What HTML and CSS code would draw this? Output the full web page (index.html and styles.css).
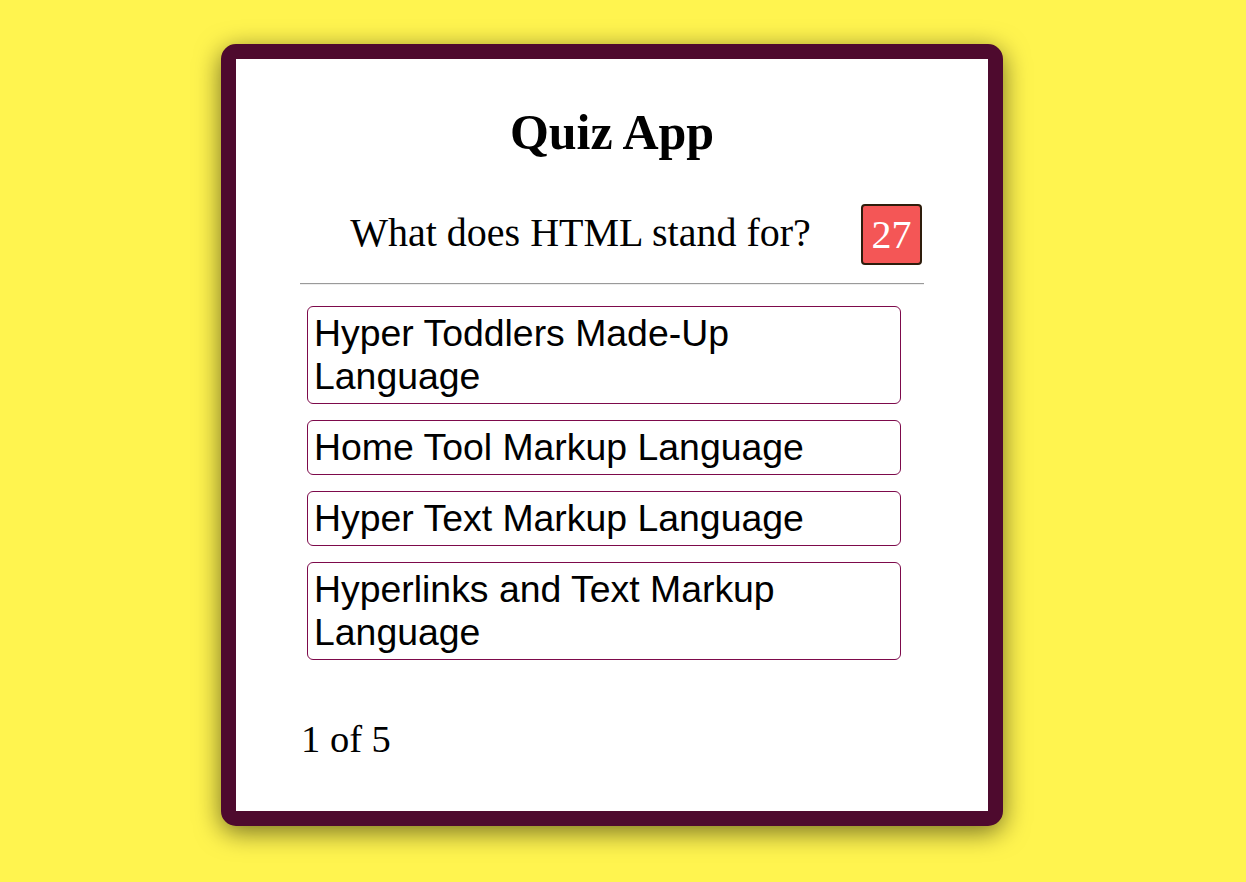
FILE: index.html
```html
<!DOCTYPE html>
<html>
<head>
<meta charset="utf-8">
<title>Quiz App</title>
<link rel="stylesheet" href="styles.css">
</head>
<body>
<div class="page">
  <div class="card">
    <h1 class="title">Quiz App</h1>
    <div class="question-row">
      <div class="question">What does HTML stand for?</div>
      <div class="timer">27</div>
    </div>
    <hr class="divider">
    <div class="options">
      <div class="option">Hyper Toddlers Made-Up Language</div>
      <div class="option">Home Tool Markup Language</div>
      <div class="option">Hyper Text Markup Language</div>
      <div class="option">Hyperlinks and Text Markup Language</div>
    </div>
    <div class="progress">1 of 5</div>
  </div>
</div>
</body>
</html>
```

FILE: styles.css
```css
html, body {
  margin: 0;
  padding: 0;
  background: #fff44f;
  font-family: "Liberation Serif", "Times New Roman", serif;
}

.page {
  padding: 44px 0 0 221px;
  height: 882px;
  box-sizing: border-box;
}

.card {
  width: 782px;
  height: 782px;
  box-sizing: border-box;
  background: #ffffff;
  border: 15px solid #4e0a2e;
  border-radius: 15px;
  box-shadow: 0 6px 26px rgba(0, 0, 0, 0.55);
  padding: 0 64px;
  display: flex;
  flex-direction: column;
}

.title {
  margin: 46px 0 0 0;
  font-size: 50px;
  font-weight: bold;
  text-align: center;
  line-height: 55px;
}

.question-row {
  display: flex;
  align-items: center;
  margin-top: 44px;
}

.question {
  flex: 1;
  text-align: center;
  font-size: 40px;
  color: #000;
  padding-bottom: 5px;
}

.timer {
  width: 57px;
  height: 57px;
  background: #f45656;
  border: 2px solid #2e1d0c;
  border-radius: 4px;
  color: #fff;
  font-size: 40px;
  display: flex;
  align-items: center;
  justify-content: center;
  margin-right: 2px;
}

.divider {
  margin: 18px 0 0 0;
  border: 0;
  border-top: 1px solid #9a9a9a;
  border-bottom: 1px solid #eeeeee;
  height: 0;
}

.options {
  display: flex;
  flex-direction: column;
  gap: 16px;
  margin: 21px 23px 0 7px;
}

.option {
  font-family: "Liberation Sans", Arial, sans-serif;
  font-size: 37.4px;
  line-height: 43px;
  color: #000;
  border: 1px solid #7d0a4b;
  border-radius: 6px;
  padding: 5px 6px;
}

.progress {
  margin-top: 57px;
  margin-left: 1px;
  font-size: 38.5px;
}
```
